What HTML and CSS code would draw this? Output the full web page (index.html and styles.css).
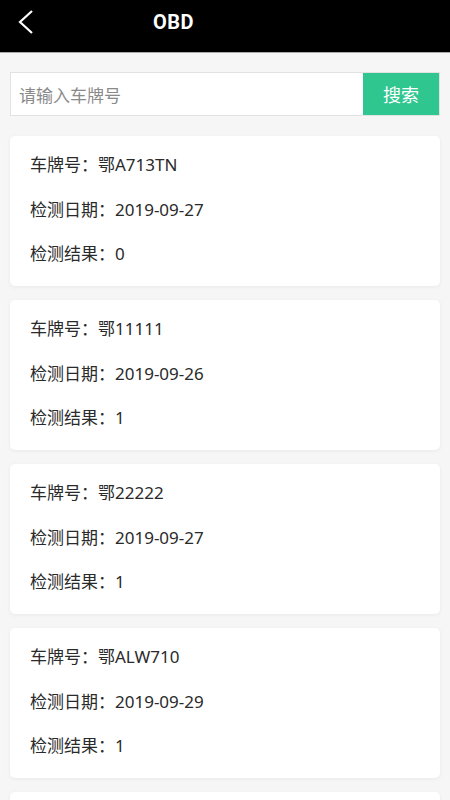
FILE: index.html
```html
<!DOCTYPE html>
<html lang="zh">
<head>
<meta charset="utf-8">
<link rel="stylesheet" href="styles.css">
</head>
<body>
<header class="bar">
  <svg class="back" width="20" height="26" viewBox="0 0 20 26"><path d="M16 2 L4 13 L16 24" fill="none" stroke="#fff" stroke-width="2.2"/></svg>
  <div class="title">OBD</div>
</header>
<main class="page">
  <div class="search">
    <div class="input">请输入车牌号</div>
    <div class="btn">搜索</div>
  </div>
  <div class="card">
    <div class="row">车牌号：鄂A713TN</div>
    <div class="row">检测日期：2019-09-27</div>
    <div class="row">检测结果：0</div>
  </div>
  <div class="card">
    <div class="row">车牌号：鄂11111</div>
    <div class="row">检测日期：2019-09-26</div>
    <div class="row">检测结果：1</div>
  </div>
  <div class="card">
    <div class="row">车牌号：鄂22222</div>
    <div class="row">检测日期：2019-09-27</div>
    <div class="row">检测结果：1</div>
  </div>
  <div class="card">
    <div class="row">车牌号：鄂ALW710</div>
    <div class="row">检测日期：2019-09-29</div>
    <div class="row">检测结果：1</div>
  </div>
  <div class="card"></div>
</main>
</body>
</html>
```
FILE: styles.css
```css
html, body { margin: 0; padding: 0; }
body {
  width: 450px;
  height: 800px;
  overflow: hidden;
  background: #f6f6f6;
  font-family: "Noto Sans", "Noto Sans CJK SC", sans-serif;
}
.bar {
  height: 52px;
  background: #000;
  border-bottom: 1px solid #aaa;
  display: flex;
  align-items: center;
  padding-left: 16px;
}
.back { display: block; margin-top: -8px; }
.title {
  color: #fff;
  font-size: 20px;
  font-weight: bold;
  margin-left: 117px;
  margin-top: -9px;
  font-family: Roboto, sans-serif;
  letter-spacing: 0.5px;
}
.page {
  padding: 19px 10px 0;
  display: flex;
  flex-direction: column;
  gap: 14px;
}
.search {
  height: 44px;
  display: flex;
  border: 1px solid #e2e2e2;
  background: #fff;
  margin-bottom: 6px;
  box-sizing: border-box;
}
.input {
  flex: 1;
  display: flex;
  align-items: center;
  padding-left: 8px;
  font-size: 17px;
  color: #8a8a8a;
}
.btn {
  width: 76px;
  background: #2fc690;
  color: #fff;
  font-size: 18px;
  display: flex;
  align-items: center;
  justify-content: center;
}
.card {
  flex: none;
  height: 150px;
  box-sizing: border-box;
  background: #fff;
  border-radius: 5px;
  box-shadow: 0 1px 4px rgba(0,0,0,0.06);
  padding: 16px 20px 0;
}
.row {
  height: 44.5px;
  line-height: 26px;
  font-size: 17px;
  color: #2a2a2a;
}
```
